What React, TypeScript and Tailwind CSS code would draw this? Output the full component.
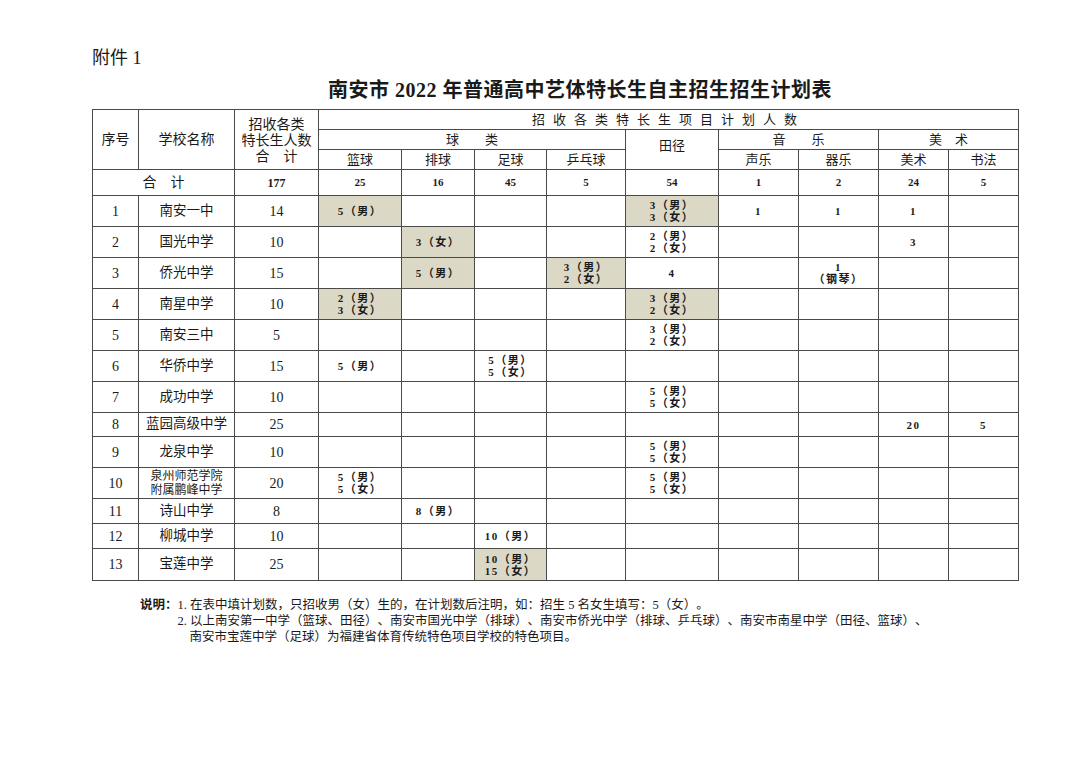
import React from "react"

type Cell = { t?: string[]; s?: boolean }

const cols = [46, 96, 84, 83, 73, 72, 79, 93, 80, 80, 70, 70]

// 篮球 排球 足球 乒乓球 田径 声乐 器乐 美术 书法
const rows: { no: string; name: string[]; total: string; h: number; cells: Record<number, Cell> }[] = [
  { no: "1", name: ["南安一中"], total: "14", h: 31, cells: { 0: { t: ["5（男）"], s: true }, 4: { t: ["3（男）", "3（女）"], s: true }, 5: { t: ["1"] }, 6: { t: ["1"] }, 7: { t: ["1"] } } },
  { no: "2", name: ["国光中学"], total: "10", h: 31, cells: { 1: { t: ["3（女）"], s: true }, 4: { t: ["2（男）", "2（女）"] }, 7: { t: ["3"] } } },
  { no: "3", name: ["侨光中学"], total: "15", h: 31, cells: { 1: { t: ["5（男）"], s: true }, 3: { t: ["3（男）", "2（女）"], s: true }, 4: { t: ["4"] }, 6: { t: ["1", "（钢琴）"] } } },
  { no: "4", name: ["南星中学"], total: "10", h: 31, cells: { 0: { t: ["2（男）", "3（女）"], s: true }, 4: { t: ["3（男）", "2（女）"], s: true } } },
  { no: "5", name: ["南安三中"], total: "5", h: 31, cells: { 4: { t: ["3（男）", "2（女）"] } } },
  { no: "6", name: ["华侨中学"], total: "15", h: 31, cells: { 0: { t: ["5（男）"] }, 2: { t: ["5（男）", "5（女）"] } } },
  { no: "7", name: ["成功中学"], total: "10", h: 31, cells: { 4: { t: ["5（男）", "5（女）"] } } },
  { no: "8", name: ["蓝园高级中学"], total: "25", h: 24, cells: { 7: { t: ["20"] }, 8: { t: ["5"] } } },
  { no: "9", name: ["龙泉中学"], total: "10", h: 31, cells: { 4: { t: ["5（男）", "5（女）"] } } },
  { no: "10", name: ["泉州师范学院", "附属鹏峰中学"], total: "20", h: 31, cells: { 0: { t: ["5（男）", "5（女）"] }, 4: { t: ["5（男）", "5（女）"] } } },
  { no: "11", name: ["诗山中学"], total: "8", h: 25, cells: { 1: { t: ["8（男）"] } } },
  { no: "12", name: ["柳城中学"], total: "10", h: 25, cells: { 2: { t: ["10（男）"] } } },
  { no: "13", name: ["宝莲中学"], total: "25", h: 32, cells: { 2: { t: ["10（男）", "15（女）"], s: true } } },
]

const totals = ["25", "16", "45", "5", "54", "1", "2", "24", "5"]

const bd = "border border-[#4a4a4a] p-0 text-center align-middle"
const serif = { fontFamily: '"Liberation Serif", "Noto Sans CJK SC", serif' }

export default function App() {
  return (
    <div className="min-h-[764px] w-[1080px] bg-white text-[#1a1a1a] [text-spacing-trim:space-all]" style={serif}>
      <div className="pl-[92px] pt-[45px]">
        <div className="text-[18px] leading-[26px]">附件 1</div>
        <div className="pl-[236px] pt-[6px] text-[20px] font-bold leading-[26px] tracking-[0.5px]">
          南安市 2022 年普通高中艺体特长生自主招生招生计划表
        </div>
        <table className="mt-[6px] table-fixed border-collapse" style={{ width: 926 }}>
          <colgroup>
            {cols.map((w, i) => (
              <col key={i} style={{ width: w }} />
            ))}
          </colgroup>
          <tbody className="text-[13px]">
            <tr className="h-[20px]">
              <td rowSpan={3} className={bd + " text-[14px]"}>序号</td>
              <td rowSpan={3} className={bd + " text-[14px]"}>学校名称</td>
              <td rowSpan={3} className={bd + " pt-[3px] text-[14px] leading-[16px]"}>
                招收各类<br />特长生人数<br />合　计
              </td>
              <td colSpan={9} className={bd + " leading-[18px] tracking-[8px]"}>招收各类特长生项目计划人数</td>
            </tr>
            <tr className="h-[20px]">
              <td colSpan={4} className={bd + " leading-[18px]"}>球　　类</td>
              <td rowSpan={2} className={bd + " align-top pt-[6px]"}>田径</td>
              <td colSpan={2} className={bd + " leading-[18px]"}>音　　乐</td>
              <td colSpan={2} className={bd + " leading-[18px]"}>美　术</td>
            </tr>
            <tr className="h-[20px]">
              {["篮球", "排球", "足球", "乒乓球"].map((x) => (
                <td key={x} className={bd + " leading-[18px]"}>{x}</td>
              ))}
              {["声乐", "器乐", "美术", "书法"].map((x) => (
                <td key={x} className={bd + " leading-[18px]"}>{x}</td>
              ))}
            </tr>
            <tr className="h-[26px]">
              <td colSpan={2} className={bd + " text-[14px]"}>合　计</td>
              <td className={bd + " text-[12px] font-bold"}>177</td>
              {totals.map((x, i) => (
                <td key={i} className={bd + " text-[11px] font-bold"}>{x}</td>
              ))}
            </tr>
            {rows.map((r) => (
              <tr key={r.no} style={{ height: r.h }}>
                <td className={bd + " text-[14px]"}>{r.no}</td>
                <td className={bd + (r.name.length > 1 ? " text-[12px] leading-[14px]" : " text-[13.5px]")}>
                  {r.name.map((n) => (
                    <div key={n}>{n}</div>
                  ))}
                </td>
                <td className={bd + " text-[14px]"}>{r.total}</td>
                {Array.from({ length: 9 }).map((_, i) => {
                  const c = r.cells[i]
                  return (
                    <td key={i} className={bd + (c?.s ? " bg-[#dcd8c6]" : "") + " text-[11px] font-bold leading-[12px] tracking-[1.5px]"}>
                      {c?.t?.map((l, j) => (
                        <div key={j}>{l}</div>
                      ))}
                    </td>
                  )
                })}
              </tr>
            ))}
          </tbody>
        </table>
        <div className="mt-[16px] flex text-[12.5px] leading-[16px]">
          <div className="w-[48px] pl-[48px]" />
          <div className="font-bold">说明：</div>
          <div>
            <div>1. 在表中填计划数，只招收男（女）生的，在计划数后注明，如：招生 5 名女生填写：5（女）。</div>
            <div>2. 以上南安第一中学（篮球、田径）、南安市国光中学（排球）、南安市侨光中学（排球、乒乓球）、南安市南星中学（田径、篮球）、</div>
            <div className="pl-[12px]">南安市宝莲中学（足球）为福建省体育传统特色项目学校的特色项目。</div>
          </div>
        </div>
      </div>
    </div>
  )
}
